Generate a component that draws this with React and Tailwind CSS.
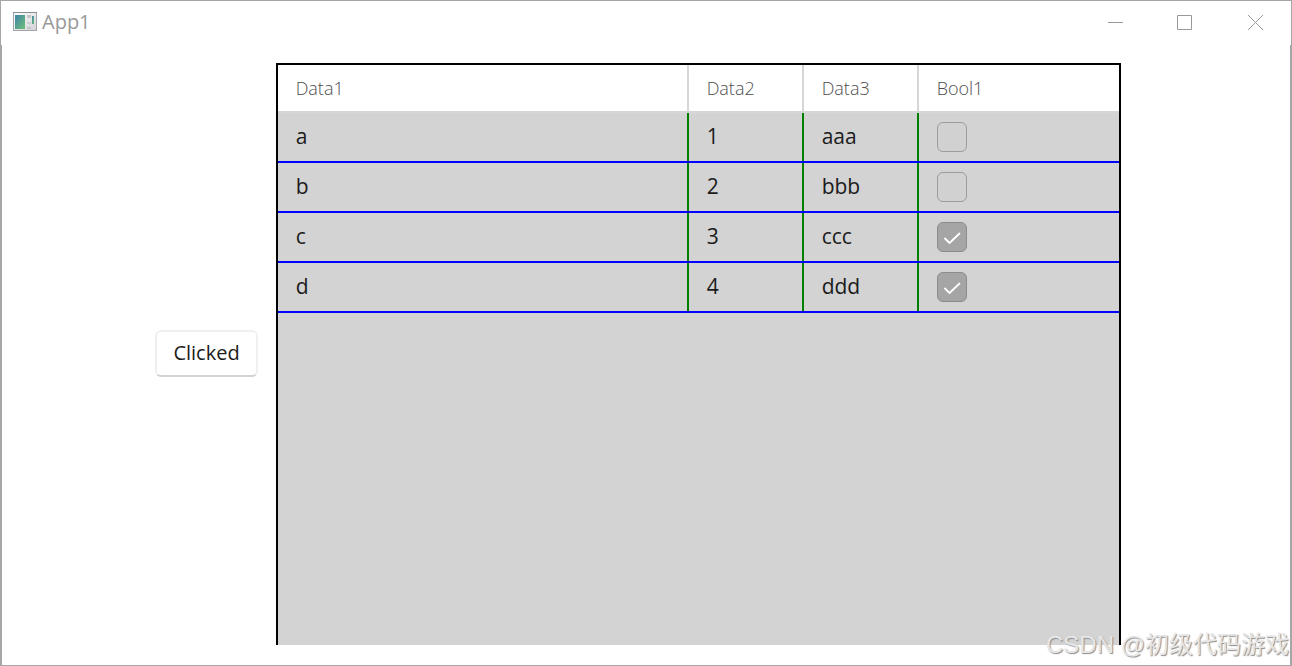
import React, { useState } from "react";

const initialRows = [
  { data1: "a", data2: 1, data3: "aaa", bool1: false },
  { data1: "b", data2: 2, data3: "bbb", bool1: false },
  { data1: "c", data2: 3, data3: "ccc", bool1: true },
  { data1: "d", data2: 4, data3: "ddd", bool1: true },
];

function AppIcon() {
  return (
    <svg width="24" height="20" viewBox="0 0 24 20" aria-hidden="true">
      <defs>
        <linearGradient id="screen" x1="0" y1="0" x2="1" y2="1">
          <stop offset="0" stopColor="#3f83ab" />
          <stop offset="1" stopColor="#6fc076" />
        </linearGradient>
        <linearGradient id="frame" x1="0" y1="0" x2="1" y2="1">
          <stop offset="0" stopColor="#ffffff" />
          <stop offset="1" stopColor="#d2d2d6" />
        </linearGradient>
      </defs>
      <rect x="0.5" y="0.5" width="23" height="18" fill="url(#frame)" stroke="#a3a3ab" />
      <path d="M0 0.5h24" stroke="#8b8b94" />
      <rect x="2" y="3" width="10" height="14" fill="url(#screen)" />
      <rect x="14" y="3" width="4" height="3" fill="#c5c5c8" />
      <rect x="14" y="10" width="4" height="2" fill="#d0d0d3" />
      <rect x="14" y="15" width="4" height="2" fill="#c5c5c8" />
      <rect x="19" y="4" width="2" height="8" fill="url(#screen)" />
    </svg>
  );
}

function TitleBar() {
  return (
    <header className="flex h-11 shrink-0 items-center justify-between pb-0.5 pl-3">
      <div className="flex items-center gap-[5px]">
        <AppIcon />
        <span className="text-[20px] leading-6 text-[#999999]">App1</span>
      </div>
      <div className="flex h-full text-[#999999]">
        <button aria-label="Minimize" className="flex w-[69px] items-center justify-center">
          <svg width="15" height="15" viewBox="0 0 15 15" fill="none" stroke="currentColor">
            <path d="M0 7.5h15" />
          </svg>
        </button>
        <button aria-label="Maximize" className="flex w-[69px] items-center justify-center">
          <svg width="15" height="15" viewBox="0 0 15 15" fill="none" stroke="currentColor">
            <path d="M0.5 0.5h14v14h-14z" />
          </svg>
        </button>
        <button aria-label="Close" className="flex w-[72px] items-center justify-center">
          <svg width="15" height="15" viewBox="0 0 15 15" fill="none" stroke="currentColor">
            <path d="M0 0l15 15M15 0L0 15" />
          </svg>
        </button>
      </div>
    </header>
  );
}

function CheckBox({ label, checked, onChange }) {
  return (
    <label className="grid size-[30px] place-items-center">
      <input
        type="checkbox"
        aria-label={label}
        checked={checked}
        onChange={onChange}
        className="peer col-start-1 row-start-1 size-[30px] appearance-none rounded-md border border-[#9c9c9c] bg-[#d1d1d1] checked:border-[#8c8c8c] checked:bg-[#a5a5a5]"
      />
      <svg
        className="pointer-events-none invisible col-start-1 row-start-1 peer-checked:visible"
        width="30"
        height="30"
        viewBox="0 0 30 30"
        fill="none"
        stroke="white"
        strokeWidth="1.8"
        strokeLinecap="round"
        strokeLinejoin="round"
      >
        <path d="M8 16.5l4.5 4.5L22.5 11.5" />
      </svg>
    </label>
  );
}

function TextCell({ children }) {
  return (
    <td className="border-b-2 border-[#0000ff] p-0">
      <div className="flex h-12 items-center border-r-2 border-[#008000] px-[18px] pb-0.5">
        {children}
      </div>
    </td>
  );
}

function CheckCell({ children }) {
  return (
    <td className="border-b-2 border-[#0000ff] p-0">
      <div className="flex h-12 items-center px-[18px]">{children}</div>
    </td>
  );
}

function DataGrid() {
  const [rows, setRows] = useState(initialRows);
  const toggle = (index) =>
    setRows(rows.map((row, i) => (i === index ? { ...row, bool1: !row.bool1 } : row)));

  return (
    <div className="w-[845px] self-stretch border-2 border-b-0 border-black bg-[#d3d3d3]">
      <table className="w-full table-fixed border-separate border-spacing-0 text-left">
        <colgroup>
          <col />
          <col className="w-[115px]" />
          <col className="w-[115px]" />
          <col className="w-[200px]" />
        </colgroup>
        <thead className="bg-white text-[18px] leading-6 text-[#4d4d4d]">
          <tr className="h-12">
            <th className="border-r-2 border-b-2 border-[#d6d6d6] px-[18px] py-0 font-light">Data1</th>
            <th className="border-r-2 border-b-2 border-[#d6d6d6] px-[18px] py-0 font-light">Data2</th>
            <th className="border-r-2 border-b-2 border-[#d6d6d6] px-[18px] py-0 font-light">Data3</th>
            <th className="border-b-2 border-[#d6d6d6] px-[18px] py-0 font-light">Bool1</th>
          </tr>
        </thead>
        <tbody className="text-[21px] leading-7 text-[#1b1b1b]">
          {rows.map((row, i) => (
            <tr key={row.data1}>
              <TextCell>{row.data1}</TextCell>
              <TextCell>{row.data2}</TextCell>
              <TextCell>{row.data3}</TextCell>
              <CheckCell>
                <CheckBox label="Bool1" checked={row.bool1} onChange={() => toggle(i)} />
              </CheckCell>
            </tr>
          ))}
        </tbody>
      </table>
    </div>
  );
}

function App() {
  return (
    <div className="relative flex h-screen flex-col border border-[#a6a6a6] bg-white font-['Open_Sans','Noto_Sans_CJK_SC',sans-serif]">
      <TitleBar />
      <main className="flex min-h-0 grow items-center justify-center gap-[18px] border-x border-[#a6a6a6] pt-[18px] pr-4 pb-5">
        <button className="mb-0.5 rounded-md border-2 border-[#f0f0f0] border-b-[#d3d3d3] px-4 pt-[7px] pb-2 text-[20px] leading-7 text-[#1b1b1b]">
          Clicked
        </button>
        <DataGrid />
      </main>
      <div className="pointer-events-none absolute right-0.5 bottom-1 font-['Liberation_Sans','Noto_Sans_CJK_SC',sans-serif] text-[24px] leading-8 whitespace-nowrap text-[#e6e6e6] [text-shadow:1px_1px_1px_#8c8c8c]">
        CSDN @初级代码游戏
      </div>
    </div>
  );
}

export default App;
